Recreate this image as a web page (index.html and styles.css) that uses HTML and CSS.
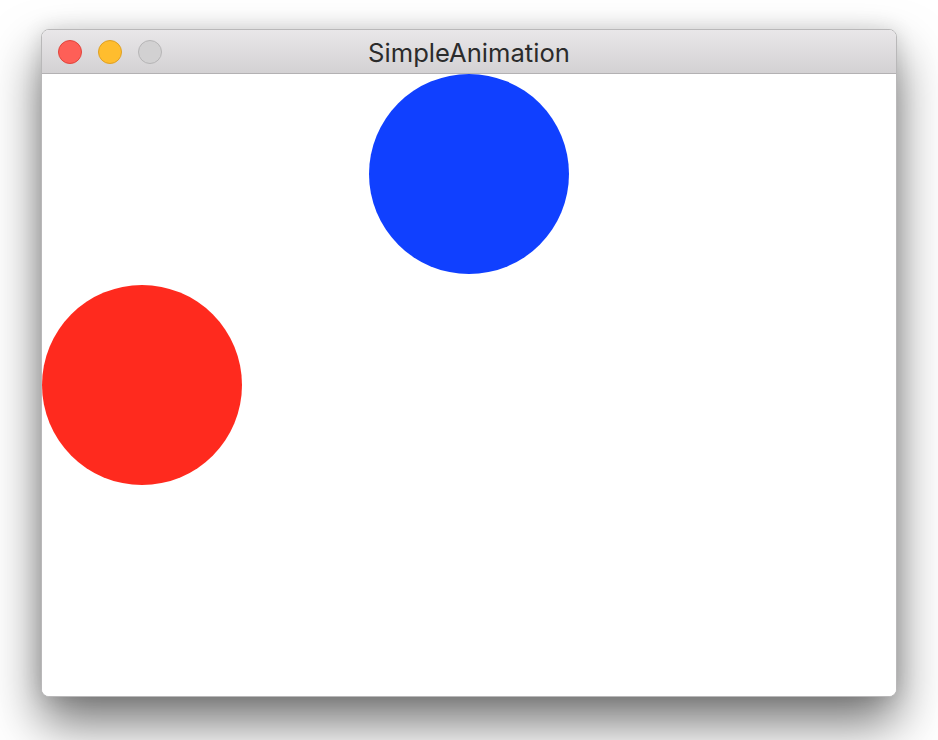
FILE: index.html
```html
<!DOCTYPE html>
<html>
<head>
<meta charset="utf-8">
<title>SimpleAnimation</title>
<link rel="stylesheet" href="styles.css">
</head>
<body>
<div class="window">
  <div class="titlebar">
    <div class="lights">
      <span class="light close"></span>
      <span class="light minimize"></span>
      <span class="light zoom"></span>
    </div>
    <div class="title">SimpleAnimation</div>
  </div>
  <div class="canvas">
    <div class="ball blue"></div>
    <div class="ball red"></div>
  </div>
</div>
</body>
</html>
```

FILE: styles.css
```css
html, body {
  margin: 0;
  padding: 0;
  background: #ffffff;
}
body {
  width: 938px;
  height: 740px;
  overflow: hidden;
  padding: 29px 0 0 41px;
  box-sizing: border-box;
}
.window {
  width: 856px;
  height: 668px;
  border-radius: 8px;
  border: 1px solid #b9b8b9;
  box-sizing: border-box;
  display: flex;
  flex-direction: column;
  background: #ffffff;
  box-shadow: 0 26px 50px rgba(0, 0, 0, 0.55), 0 0 20px rgba(0, 0, 0, 0.12);
  overflow: hidden;
}
.titlebar {
  position: relative;
  height: 43px;
  flex: none;
  background: linear-gradient(#e9e7e9, #d3d1d3);
  border-bottom: 1px solid #b3b1b3;
  display: flex;
  align-items: center;
  justify-content: center;
}
.lights {
  position: absolute;
  left: 16px;
  top: 10px;
  display: flex;
  gap: 16px;
}
.light {
  width: 24px;
  height: 24px;
  border-radius: 50%;
  box-sizing: border-box;
  border: 1px solid;
}
.close { background: #fe5f57; border-color: #e1443c; }
.minimize { background: #ffbd2e; border-color: #dfa023; }
.zoom { background: #d2d1d2; border-color: #b6b5b6; }
.title {
  font-family: Inter, "Liberation Sans", Arial, sans-serif;
  font-size: 25.6px;
  color: #2b2b2b;
  line-height: 1;
  margin-top: 2px;
}
.canvas {
  position: relative;
  flex: 1;
  background: #ffffff;
}
.ball {
  position: absolute;
  width: 200px;
  height: 200px;
  border-radius: 50%;
}
.blue {
  background: #1040ff;
  left: 327px;
  top: 0;
}
.red {
  background: #ff2a1e;
  left: 0;
  top: 211px;
}
```
